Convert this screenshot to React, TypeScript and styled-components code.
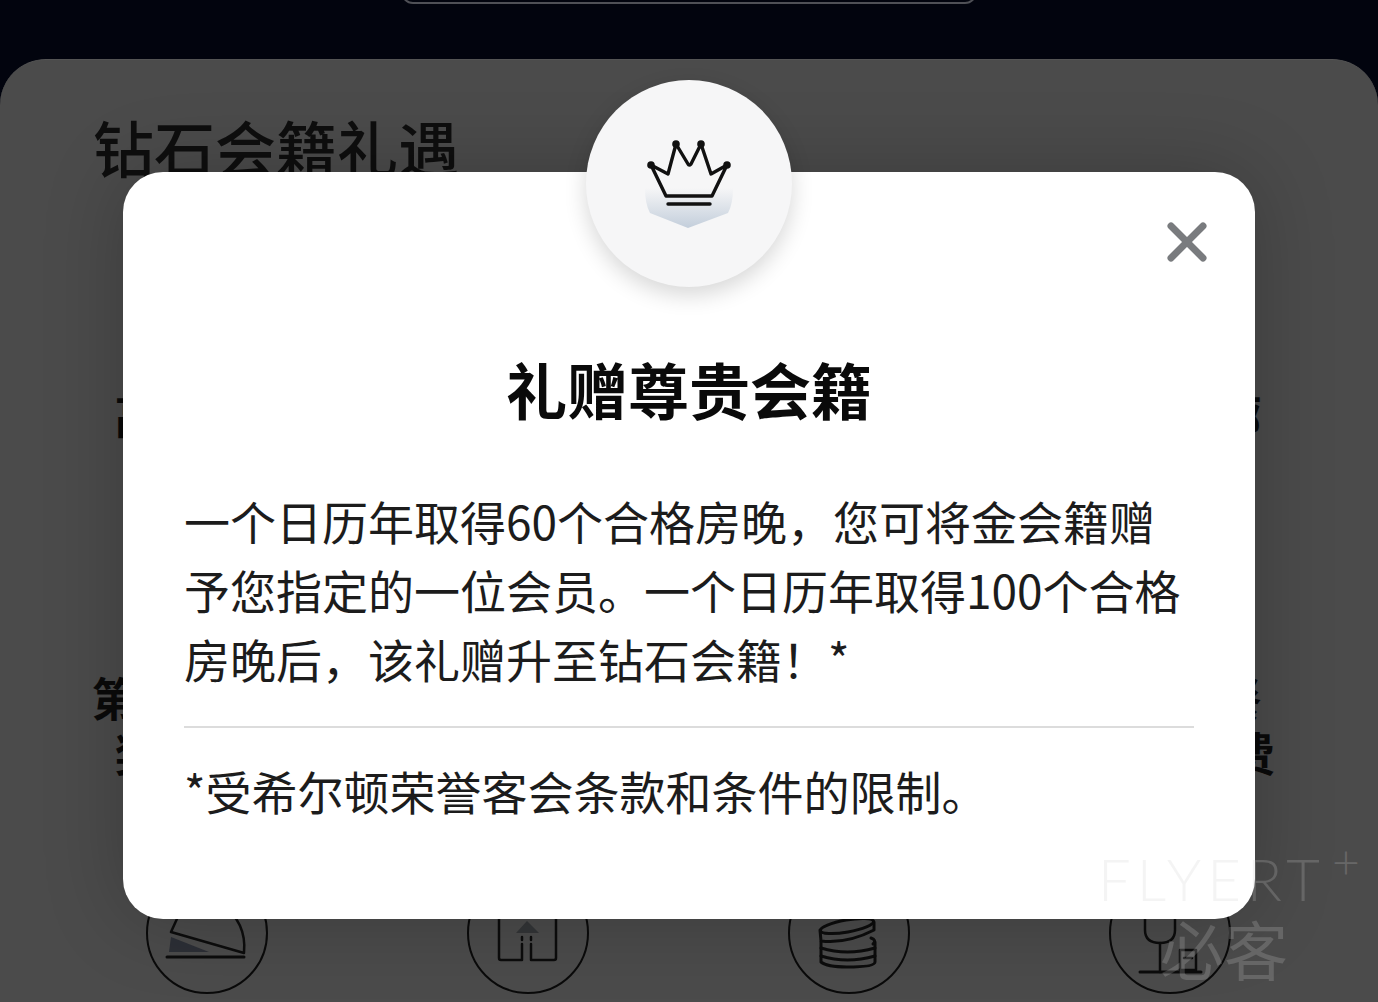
import React from "react"
import styled, { createGlobalStyle } from "styled-components"

const FONT = `"Noto Sans CJK SC", "Noto Sans", sans-serif`

const GlobalStyle = createGlobalStyle`
  html, body {
    margin: 0;
    height: 100%;
    background: #02040f;
    overflow: hidden;
  }
  #root {
    height: 100%;
  }
`

const Page = styled.div`
  position: relative;
  width: 1378px;
  height: 1002px;
  overflow: hidden;
  font-family: ${FONT};
  background: #02040e;
`

const TopBar = styled.div`
  height: 59px;
  display: flex;
  justify-content: center;
`

const TopPill = styled.div`
  width: 576px;
  height: 24px;
  margin-top: -20px;
  box-sizing: border-box;
  border: 2.5px solid #4f5056;
  border-radius: 26px;
`

const Sheet = styled.section`
  height: 943px;
  box-sizing: border-box;
  padding: 45px 0 0 46px;
  background: #4b4b4b;
  border-radius: 46px 46px 0 0;
  border-top: 1px solid #545454;
`

const SheetTitle = styled.h2`
  margin: 0 0 0 47px;
  height: 92px;
  font-size: 61px;
  line-height: 84px;
  font-weight: 500;
  color: #0e0e0e;
`

const BenefitGrid = styled.div`
  display: grid;
  grid-template-columns: repeat(4, 321px);
  grid-template-rows: 283px 345px auto;
  margin-top: 47px;
`

const Benefit = styled.div`
  display: flex;
  flex-direction: column;
  align-items: center;
`

const Ring = styled.div`
  flex: none;
  width: 122px;
  height: 122px;
  box-sizing: border-box;
  border: 2.5px solid #0a0a0a;
  border-radius: 50%;
  margin-bottom: 20px;
`

const RingIcon = styled.svg`
  display: block;
  width: 122px;
  height: 122px;
  margin: -2.5px;
  fill: none;
  stroke: #0c0c0c;
  stroke-width: 2.5;
  stroke-linecap: round;
  stroke-linejoin: round;
`

const BenefitLabel = styled.div`
  font-size: 46px;
  line-height: 55px;
  font-weight: 700;
  color: #0a0a0a;
  text-align: center;
  white-space: pre-line;
`

const Modal = styled.div`
  position: absolute;
  left: 123px;
  top: 172px;
  width: 1132px;
  height: 747px;
  box-sizing: border-box;
  padding: 177px 61px 0;
  background: #fff;
  border-radius: 40px;
  box-shadow: 0 0 80px rgba(0, 0, 0, 0.22);
`

const Badge = styled.div`
  position: absolute;
  left: 463px;
  top: -92px;
  width: 206px;
  height: 207px;
  border-radius: 50%;
  background: #f6f6f7;
  box-shadow: 0 8px 22px rgba(0, 0, 0, 0.16);
  display: flex;
  align-items: center;
  justify-content: center;
`

const CrownMark = styled.svg`
  margin-top: 4px;
`

const CloseButton = styled.button`
  position: absolute;
  right: 46px;
  top: 48px;
  width: 44px;
  height: 44px;
  padding: 0;
  border: 0;
  background: none;
`

const ModalTitle = styled.h1`
  margin: 0;
  font-size: 61px;
  line-height: 80px;
  font-weight: 700;
  color: #0a0a0a;
  text-align: center;
`

const ModalBody = styled.p`
  margin: 57px 0 0;
  font-size: 46px;
  line-height: 69px;
  font-weight: 400;
  color: #1c1c1c;
`

const Divider = styled.hr`
  margin: 33px 0 0;
  border: 0;
  height: 2px;
  background: #dcdcdc;
`

const Footnote = styled.p`
  margin: 28px 0 0;
  font-size: 46px;
  line-height: 69px;
  font-weight: 400;
  color: #1c1c1c;
`

const Watermark = styled.div`
  position: absolute;
  left: 1098px;
  top: 848px;
  width: 270px;
  color: rgba(205, 205, 205, 0.22);
  pointer-events: none;
`

const WatermarkLatin = styled.div`
  font-family: "Lato", "Liberation Sans", sans-serif;
  font-size: 58px;
  line-height: 62px;
  font-weight: 300;
  letter-spacing: 6px;
  white-space: nowrap;
`

const WatermarkPlus = styled.sup`
  font-size: 48px;
  line-height: 0;
  vertical-align: 22px;
  letter-spacing: 0;
  margin-left: 6px;
`

const WatermarkCjk = styled.div`
  margin: 2px 0 0 62px;
  font-size: 64px;
  line-height: 70px;
  font-weight: 400;
  white-space: nowrap;
`

const Crown = () => (
  <CrownMark width="100" height="100" viewBox="0 0 100 100" fill="none">
    <defs>
      <linearGradient id="crownShield" x1="0" y1="0" x2="0" y2="1">
        <stop offset="0" stopColor="#f6f6f7" />
        <stop offset="1" stopColor="#c3cedb" />
      </linearGradient>
    </defs>
    <path d="M6 52 H94 Q94 68 89 77 L49 92 L11 77 Q6 68 6 52 Z" fill="url(#crownShield)" />
    <path
      d="M12 29 L29 38 L37 8 L49 28 Q50 30 52 28 L62 8 L72 38 L88 29 L73 60 L27 60 Z"
      stroke="#111"
      strokeWidth="3.4"
      strokeLinejoin="round"
    />
    <circle cx="12" cy="29" r="3.8" fill="#111" />
    <circle cx="37" cy="8" r="3.8" fill="#111" />
    <circle cx="62" cy="8" r="3.8" fill="#111" />
    <circle cx="88" cy="29" r="3.8" fill="#111" />
    <path d="M29 68 H71" stroke="#111" strokeWidth="3.4" strokeLinecap="round" />
  </CrownMark>
)

const CloseIcon = () => (
  <svg width="44" height="44" viewBox="0 0 44 44">
    <path d="M6 6 L38 38 M38 6 L6 38" stroke="#797b7e" strokeWidth="7" strokeLinecap="round" />
  </svg>
)

const BedIcon = () => (
  <RingIcon viewBox="0 0 122 122">
    <path d="M26 65 L24 80 H64 Z" fill="#2c2f36" stroke="none" />
    <path d="M26 60 L99 81 Q102 50 76 32 Q52 22 36 38 Z" />
    <path d="M22 85 H99" strokeWidth="3" />
  </RingIcon>
)

const DoorIcon = () => (
  <RingIcon viewBox="0 0 122 122">
    <path d="M33 30 V86 Q33 88 35 88 H56 V72 M90 30 V86 Q90 88 88 88 H65 V72" />
    <path d="M56 65 V68 M65 65 V68" />
    <path d="M61 49 L50 61 H73 Z" fill="#333537" stroke="none" />
    <path d="M33 30 H90" />
  </RingIcon>
)

const CoinsIcon = () => (
  <RingIcon viewBox="0 0 122 122">
    <ellipse cx="60" cy="54" rx="27" ry="6" transform="rotate(-10 60 54)" strokeWidth="3" />
    <path d="M33 58 L34 69 Q60 72 87 58 V50" strokeWidth="3" />
    <path d="M34 70 V90 Q40 95 60 95 Q88 95 88 90 V70" strokeWidth="3" />
    <path d="M34 76 Q60 84 88 76 M34 84 Q60 92 88 84 M84 66 Q90 68 86 72" strokeWidth="3" />
  </RingIcon>
)

const WineIcon = () => (
  <RingIcon viewBox="0 0 122 122">
    <path d="M37 30 V58 Q37 71 52 71 Q67 71 67 58 V30 Z" />
    <path d="M52 71 V100" />
    <path d="M32 100 H93" strokeWidth="3" />
    <path d="M72 78 H88 V98 H72 Z" />
    <path d="M76 86 H84" />
  </RingIcon>
)

const benefits: { label: string; icon?: React.ReactNode }[] = [
  { label: "高级客房\n升级" },
  { label: "延迟退房\n礼遇" },
  { label: "积分奖励\n加赠" },
  { label: "行政酒廊\n礼遇" },
  { label: "第五晚免费\n奖励住宿" },
  { label: "双人同住\n专属礼遇\n优享" },
  { label: "免费无线\n网络" },
  { label: "每日早餐\n含2人免费" },
  { icon: <BedIcon />, label: "" },
  { icon: <DoorIcon />, label: "" },
  { icon: <CoinsIcon />, label: "" },
  { icon: <WineIcon />, label: "" },
]

export default function App() {
  return (
    <Page>
      <GlobalStyle />
      <TopBar>
        <TopPill />
      </TopBar>
      <Sheet>
        <SheetTitle>钻石会籍礼遇</SheetTitle>
        <BenefitGrid>
          {benefits.map((benefit, index) => (
            <Benefit key={index}>
              <Ring>{benefit.icon}</Ring>
              <BenefitLabel>{benefit.label}</BenefitLabel>
            </Benefit>
          ))}
        </BenefitGrid>
      </Sheet>

      <Modal>
        <Badge>
          <Crown />
        </Badge>
        <CloseButton aria-label="关闭">
          <CloseIcon />
        </CloseButton>
        <ModalTitle>礼赠尊贵会籍</ModalTitle>
        <ModalBody>
          一个日历年取得60个合格房晚，您可将金会籍赠予您指定的一位会员。一个日历年取得100个合格房晚后，该礼赠升至钻石会籍！*
        </ModalBody>
        <Divider />
        <Footnote>*受希尔顿荣誉客会条款和条件的限制。</Footnote>
      </Modal>

      <Watermark>
        <WatermarkLatin>
          FLYERT<WatermarkPlus>+</WatermarkPlus>
        </WatermarkLatin>
        <WatermarkCjk>必客</WatermarkCjk>
      </Watermark>
    </Page>
  )
}
